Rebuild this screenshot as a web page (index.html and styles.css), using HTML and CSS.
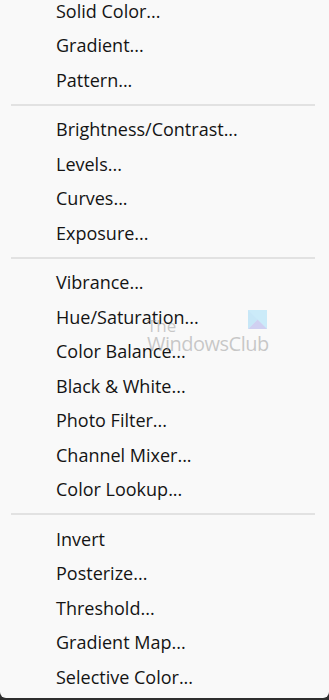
FILE: index.html
```html
<!DOCTYPE html>
<html lang="en">
<head>
  <meta charset="UTF-8">
  <meta name="viewport" content="width=device-width, initial-scale=1.0">
  <title>Adjustment Layer Menu</title>
  <link rel="stylesheet" href="styles.css">
</head>
<body>

<div class="menu">
  <ul class="group">
    <li>Solid Color...</li>
    <li>Gradient...</li>
    <li>Pattern...</li>
  </ul>
  <hr class="sep">
  <ul class="group">
    <li>Brightness/Contrast...</li>
    <li>Levels...</li>
    <li>Curves...</li>
    <li>Exposure...</li>
  </ul>
  <hr class="sep">
  <ul class="group">
    <li>Vibrance...</li>
    <li>Hue/Saturation...</li>
    <li>Color Balance...</li>
    <li>Black &amp; White...</li>
    <li>Photo Filter...</li>
    <li>Channel Mixer...</li>
    <li>Color Lookup...</li>
  </ul>
  <hr class="sep">
  <ul class="group">
    <li>Invert</li>
    <li>Posterize...</li>
    <li>Threshold...</li>
    <li>Gradient Map...</li>
    <li>Selective Color...</li>
  </ul>

  <!-- marca d'agua -->
  <div class="watermark">
    <span class="wm-the">The</span>
    <span class="wm-name">WindowsClub</span>
    <svg class="wm-logo" width="19" height="19" viewBox="0 0 19 19">
      <rect width="19" height="19" fill="#c4e9fa"/>
      <polygon points="0,19 9.5,9.5 19,19" fill="#c9c9f0"/>
      <polygon points="0,0 9.5,9.5 0,19" fill="#bfe4f7"/>
    </svg>
  </div>
</div>

</body>
</html>
```

FILE: styles.css
```css
body {
  margin: 0;
  padding: 0;
  background-color: #2e2e2e;
  font-family: 'Open Sans', sans-serif;
  overflow: hidden;
}

.menu {
  position: relative;
  background-color: #f9f9f9;
  height: 698px;
  border-radius: 0 0 6px 6px;
  overflow: hidden;
}

.group {
  list-style: none;
  margin: 0;
  padding: 0;
}

.menu > .group:first-child {
  margin-top: -6.2px;
}

.group li {
  height: 34.5px;
  line-height: 34.5px;
  padding-left: 56px;
  font-size: 18px;
  color: #141414;
  white-space: nowrap;
}

.sep {
  border: none;
  height: 2px;
  background-color: #e2e2e2;
  margin: 6.5px 14px 6.5px 11px;
}

.watermark {
  position: absolute;
  left: 147px;
  top: 310px;
  width: 125px;
  height: 45px;
  pointer-events: none;
}

.wm-the,
.wm-name {
  position: absolute;
  left: 0;
  color: rgba(150, 150, 150, 0.5);
  font-family: 'Open Sans', sans-serif;
}

.wm-the {
  top: 4px;
  font-size: 17px;
}

.wm-name {
  top: 20px;
  font-size: 20px;
  letter-spacing: -0.5px;
}

.wm-logo {
  position: absolute;
  left: 101px;
  top: 0;
  opacity: 0.85;
}
```
